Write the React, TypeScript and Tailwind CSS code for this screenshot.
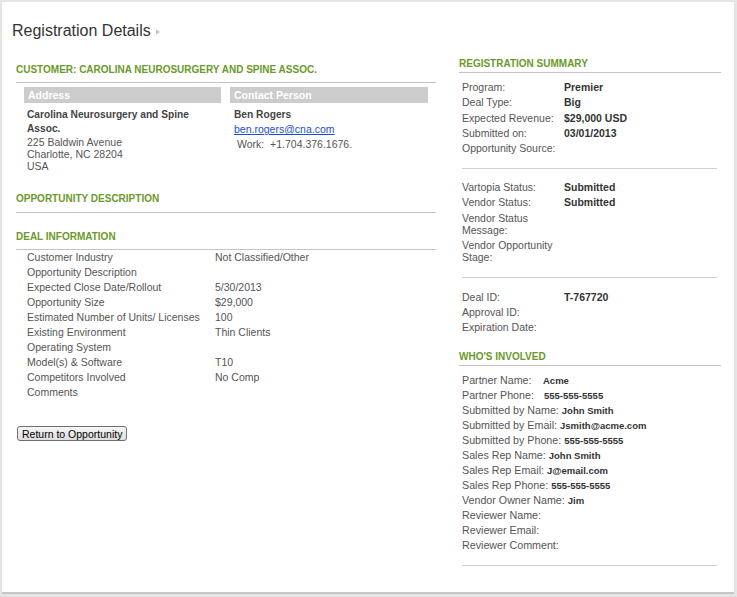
const font = { fontFamily: '"Liberation Sans", Arial, sans-serif' };

const dealRows: [string, string][] = [
  ["Customer Industry", "Not Classified/Other"],
  ["Opportunity Description", ""],
  ["Expected Close Date/Rollout", "5/30/2013"],
  ["Opportunity Size", "$29,000"],
  ["Estimated Number of Units/ Licenses", "100"],
  ["Existing Environment", "Thin Clients"],
  ["Operating System", ""],
  ["Model(s) & Software", "T10"],
  ["Competitors Involved", "No Comp"],
  ["Comments", ""],
];

const involved: [string, string][] = [
  ["Submitted by Name:", "John Smith"],
  ["Submitted by Email:", "Jsmith@acme.com"],
  ["Submitted by Phone:", "555-555-5555"],
  ["Sales Rep Name:", "John Smith"],
  ["Sales Rep Email:", "J@email.com"],
  ["Sales Rep Phone:", "555-555-5555"],
  ["Vendor Owner Name:", "Jim"],
  ["Reviewer Name:", ""],
  ["Reviewer Email:", ""],
  ["Reviewer Comment:", ""],
];

const SectionTitle = ({ children, className = "" }: { children: React.ReactNode; className?: string }) => (
  <div className={`text-[10px] leading-[14px] font-bold uppercase text-[#6a9a2a] border-b border-[#c4c4c4] ${className}`}>
    {children}
  </div>
);

const SumRow = ({ label, value, h = "h-[15px] leading-[15px]" }: { label: string; value?: string; h?: string }) => (
  <div className={`flex ${h}`}>
    <div className="w-[102px] shrink-0 text-[#555]">{label}</div>
    <div className="font-bold text-[#333]">{value}</div>
  </div>
);

const TwoLineRow = ({ a, b }: { a: string; b: string }) => (
  <div className="flex pt-[2px] pb-[1px] leading-[12px] text-[#555]">
    <div className="w-[102px] shrink-0">
      {a}
      <br />
      {b}
    </div>
  </div>
);

export default function App() {
  return (
    <div className="w-[737px] h-[597px] bg-[#e6e6e6] pt-[2px] pl-[2px]" style={font}>
      <div className="w-[732px] h-[590px] bg-white shadow-[0_2px_1px_#c8c8c8] flex text-[10.5px]">
        {/* left */}
        <div className="pl-[10px] pt-[18px] w-[434px] shrink-0">
          <div className="flex items-center h-[22px] text-[16px] text-[#333]">
            Registration Details
            <span className="ml-[5px] mt-[1px] w-0 h-0 border-y-[3px] border-y-transparent border-l-[4px] border-l-[#c8c8c8]" />
          </div>

          <div className="ml-[4px] w-[420px]">
            <SectionTitle className="mt-[21px] pb-[5px]">Customer: Carolina Neurosurgery and Spine Assoc.</SectionTitle>

            <div className="flex gap-[9px] px-[8px] mt-[4px]">
              <div className="w-[197px]">
                <div className="h-[16px] leading-[16px] bg-[#cccccc] text-white font-bold pl-[4px]">Address</div>
                <div className="pl-[3px] mt-[5px] text-[#555]">
                  <div className="font-bold text-[#444] leading-[14px] text-[10.2px]">Carolina Neurosurgery and Spine Assoc.</div>
                  <div className="leading-[12px]">225 Baldwin Avenue</div>
                  <div className="leading-[12px]">Charlotte, NC 28204</div>
                  <div className="leading-[12px]">USA</div>
                </div>
              </div>
              <div className="w-[198px]">
                <div className="h-[16px] leading-[16px] bg-[#cccccc] text-white font-bold pl-[4px]">Contact Person</div>
                <div className="pl-[4px] mt-[5px] text-[#555]">
                  <div className="font-bold text-[#444] leading-[14px] text-[10.2px]">Ben Rogers</div>
                  <div className="leading-[14px]">
                    <a href="#" className="text-[#1a4fd0] underline">ben.rogers@cna.com</a>
                  </div>
                  <div className="leading-[14px] mt-[1px] pl-[3px]">Work:&nbsp; +1.704.376.1676.</div>
                </div>
              </div>
            </div>

            <SectionTitle className="mt-[20px] pb-[6px]">Opportunity Description</SectionTitle>
            <SectionTitle className="mt-[17px] pb-[5px]">Deal Information</SectionTitle>

            <div className="pl-[11px] text-[#555]">
              {dealRows.map(([l, v]) => (
                <div key={l} className="flex h-[15px] leading-[15px]">
                  <div className="w-[188px] shrink-0">{l}</div>
                  <div>{v}</div>
                </div>
              ))}
            </div>

            <button className="mt-[26px] ml-[1px] h-[15px] px-[4px] leading-[12px] text-[10.5px] text-black bg-gradient-to-b from-[#f6f6f6] to-[#dedede] border border-[#707070] rounded-[3px]">
              Return to Opportunity
            </button>
          </div>
        </div>

        {/* right */}
        <div className="ml-[23px] pt-[55px] w-[262px] shrink-0">
          <SectionTitle className="pb-[1px]">Registration Summary</SectionTitle>
          <div className="px-[3px] mt-[7px]">
            <SumRow label="Program:" value="Premier" />
            <SumRow label="Deal Type:" value="Big" />
            <SumRow label="Expected Revenue:" value="$29,000 USD" h="h-[16px] leading-[16px]" />
            <SumRow label="Submitted on:" value="03/01/2013" />
            <SumRow label="Opportunity Source:" />

            <div className="mt-[12px] border-t border-[#cfcfcf] mr-[1px]" />

            <div className="mt-[11px]">
              <SumRow label="Vartopia Status:" value="Submitted" />
              <SumRow label="Vendor Status:" value="Submitted" />
              <TwoLineRow a="Vendor Status" b="Message:" />
              <TwoLineRow a="Vendor Opportunity" b="Stage:" />
            </div>

            <div className="mt-[13px] border-t border-[#cfcfcf] mr-[1px]" />

            <div className="mt-[12px]">
              <SumRow label="Deal ID:" value="T-767720" />
              <SumRow label="Approval ID:" />
              <SumRow label="Expiration Date:" />
            </div>
          </div>

          <SectionTitle className="mt-[15px] pb-[1px]">Who's Involved</SectionTitle>
          <div className="px-[3px] mt-[7px] text-[#555] text-[10.7px]">
            <div className="h-[15px] leading-[15px] flex">
              <span className="w-[81px] shrink-0">Partner Name:</span>
              <span className="font-bold text-[#333] text-[9.5px]">Acme</span>
            </div>
            <div className="h-[15px] leading-[15px] flex">
              <span className="w-[82px] shrink-0">Partner Phone:</span>
              <span className="font-bold text-[#333] text-[9.5px]">555-555-5555</span>
            </div>
            {involved.map(([l, v]) => (
              <div key={l} className="h-[15px] leading-[15px]">
                {l} <span className="font-bold text-[#333] text-[9.5px]">{v}</span>
              </div>
            ))}
            <div className="mt-[12px] border-t border-[#cfcfcf] mr-[1px]" />
          </div>
        </div>
      </div>
    </div>
  );
}
